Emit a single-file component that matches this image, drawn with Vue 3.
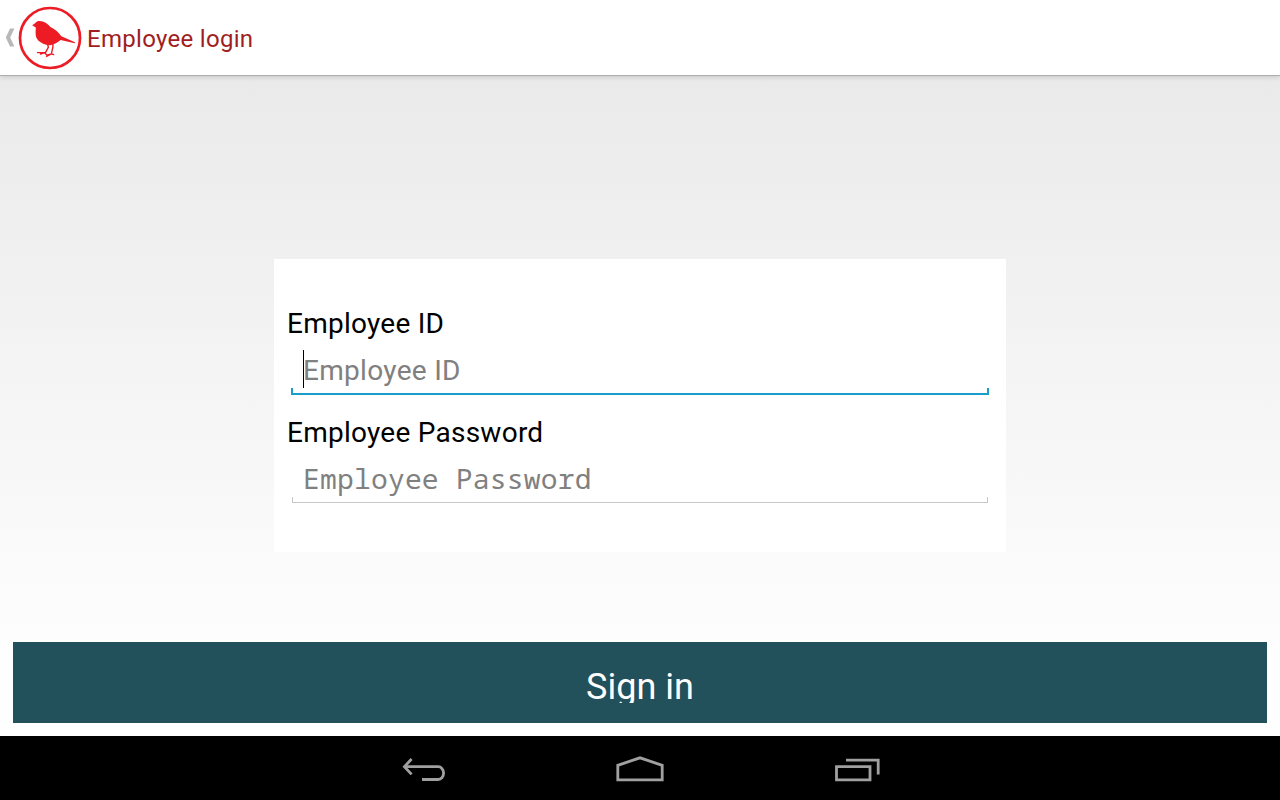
<script setup>
import { ref } from 'vue';

const employeeId = ref('');
const password = ref('');
</script>

<template>
  <div class="screen">
    <header class="action-bar">
      <svg class="up" width="10" height="20" viewBox="0 0 10 20">
        <path d="M5 0.5H9.4L5.2 9.5L9.4 18.5H5L0.8 9.5Z" fill="#b8b8b8" />
      </svg>
      <svg class="logo" width="64" height="64" viewBox="0 0 64 64">
        <circle cx="32" cy="32" r="30" fill="#fff" stroke="#ed1c24" stroke-width="2.7" />
        <path
          d="M14.2 19.2L17.4 17C18.6 15 21.6 14.6 24.8 15.6C28 16.6 30.4 19 32.4 20.9C36.7 23 40.5 26 43.3 30.2L57 36.3L56.7 37.2L42.6 34.1C40 36.4 35.8 39 32 39.2C27.2 39 21.6 36.9 19.2 33C16.9 29.2 17.8 24.8 17.8 21.4Z"
          fill="#ed1c24"
        />
        <path
          d="M29.5 38L30.4 41.2L27.6 46.4M19.5 46.6L27.6 46.4M27.6 46.4L22.5 48M34.8 38L35 40.4L33.4 47.9M26.6 46.8L29 49.2L33.4 47.9L35.6 48.6M33.4 47.9L28.6 50.4"
          fill="none"
          stroke="#ed1c24"
          stroke-width="1.4"
          stroke-linecap="round"
          stroke-linejoin="round"
        />
      </svg>
      <h1 class="title">Employee login</h1>
    </header>

    <main class="content">
      <form class="login-form">
        <label class="label" for="employee-id">Employee ID</label>
        <div class="field focused">
          <span class="caret"></span>
          <input id="employee-id" v-model="employeeId" class="input" type="text" placeholder="Employee ID" />
        </div>
        <label class="label" for="password">Employee Password</label>
        <div class="field">
          <input id="password" v-model="password" class="input mono" type="password" placeholder="Employee Password" />
        </div>
      </form>
    </main>

    <button class="sign-in"><span class="sign-in-text">Sign in</span></button>

    <nav class="nav-bar">
      <svg width="48" height="32" viewBox="0 0 48 32">
        <path d="M5 14.7H39.2A5.4 6.4 0 0 1 39.2 27.5H23" />
        <path d="M12.6 7L5.4 14.7L12.6 22.4" />
      </svg>
      <svg width="48" height="32" viewBox="0 0 48 32">
        <path d="M1.8 27.8V13.3L24 5.8L46.2 13.3V27.8Z" />
      </svg>
      <svg width="48" height="32" viewBox="0 0 48 32">
        <path d="M3.5 14.6H37V27.8H3.5ZM13 8.2H45.2V22.5" />
      </svg>
    </nav>
  </div>
</template>

<style>
body {
  margin: 0;
}
</style>

<style scoped>
.screen {
  width: 1280px;
  height: 800px;
  display: flex;
  flex-direction: column;
  overflow: hidden;
  background: linear-gradient(#eaeaea 76px, #fefefe 660px);
  font-family: Roboto, sans-serif;
}

.action-bar {
  height: 75px;
  flex: none;
  display: flex;
  align-items: center;
  background: #fff;
  border-bottom: 1px solid #aeaeae;
  box-shadow: 0 1px 5px rgba(0, 0, 0, 0.16);
}

.up {
  margin-left: 5px;
}

.logo {
  margin-left: 3px;
}

.title {
  margin: 2px 0 0 5px;
  font-size: 24px;
  font-weight: 400;
  letter-spacing: 0.3px;
  color: #a01e22;
}

.content {
  flex: 1;
  display: flex;
  justify-content: center;
  align-items: flex-start;
}

.login-form {
  width: 732px;
  height: 293px;
  margin-top: 183px;
  padding: 46px 13px 0;
  box-sizing: border-box;
  background: #fff;
}

.label {
  display: block;
  height: 37px;
  line-height: 37px;
  font-size: 28px;
  letter-spacing: 0.25px;
  color: #000;
}

.field {
  position: relative;
  height: 52px;
  margin: 0 5px 20px;
  box-sizing: border-box;
  border-bottom: 1px solid #c8c8c8;
}

.field::before,
.field::after {
  content: '';
  position: absolute;
  bottom: 0;
  width: 1px;
  height: 5px;
  background: #c8c8c8;
}

.field::before {
  left: 0;
}

.field::after {
  right: 0;
}

.focused {
  height: 53px;
  margin: 0 4px 19px;
  padding: 0 1px;
  border-bottom: 2px solid #1a9dcb;
}

.focused::before,
.focused::after {
  width: 2px;
  background: #1a9dcb;
}

.caret {
  position: absolute;
  left: 12px;
  top: 8px;
  width: 1px;
  height: 38px;
  background: #000;
}

.input {
  width: 100%;
  height: 38px;
  margin-top: 9px;
  padding: 0 11px;
  box-sizing: border-box;
  border: 0;
  outline: 0;
  background: transparent;
  font-family: Roboto, sans-serif;
  font-size: 28px;
  letter-spacing: 0.3px;
}

.input::placeholder {
  color: #808080;
  opacity: 1;
}

.mono {
  margin-top: 8px;
  font-family: 'Noto Sans Mono', 'DejaVu Sans Mono', monospace;
  letter-spacing: 0.18px;
}

.sign-in {
  height: 81px;
  flex: none;
  margin: 0 13px 13px;
  padding: 0;
  display: flex;
  justify-content: center;
  align-items: flex-start;
  border: 0;
  background: #22505b;
  color: #fff;
  font-family: Roboto, sans-serif;
}

/* fixed height cuts off the descender of the g */
.sign-in-text {
  height: 41px;
  margin-top: 20px;
  overflow: hidden;
  line-height: 50px;
  font-size: 36px;
}

.nav-bar {
  height: 64px;
  flex: none;
  display: flex;
  justify-content: center;
  align-items: center;
  gap: 169px;
  background: #000;
}

.nav-bar path {
  fill: none;
  stroke: #a0a0a0;
  stroke-width: 2.8;
}
</style>
